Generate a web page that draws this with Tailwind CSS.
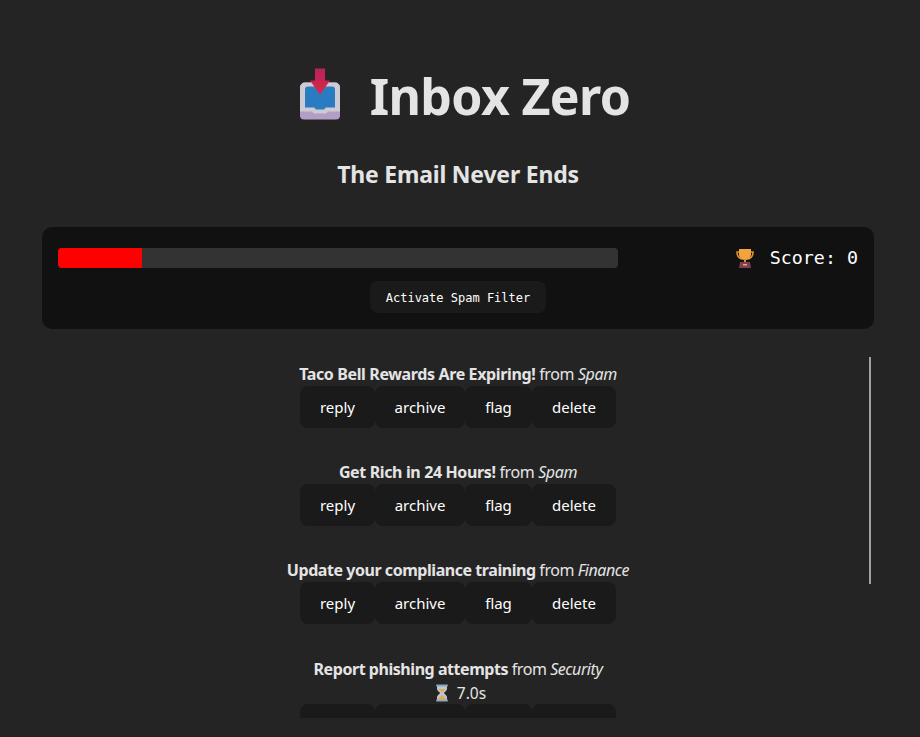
<!DOCTYPE html>
<html lang="en"><head><meta charset="utf-8"><title>Inbox Zero</title>
<script src="https://cdn.jsdelivr.net/npm/@tailwindcss/browser@4"></script></head>
<body class="bg-[#242424] h-[737px] overflow-hidden font-['Noto_Sans',sans-serif] text-[#e4e4e4]">
<div class="w-[916px] px-[42px] flex flex-col items-center">
  <h1 class="mt-[61px] h-[70px] flex items-center gap-[28px] text-[50px] font-bold leading-[70px] tracking-[-0.65px]">
    <svg class="w-[56px] h-[52px] shrink-0 overflow-visible" viewBox="-12 2.500 56 52"><defs><linearGradient id="a" x1="0" y1="0" x2="0" y2="1"><stop offset="0" stop-color="#b5245f"/><stop offset="1" stop-color="#e0243f"/></linearGradient></defs><path d="M2 20a5 5 0 0 1 5-5h30a5 5 0 0 1 5 5v28a4 4 0 0 1-4 4H6a4 4 0 0 1-4-4z" fill="#b39fc6"/><path d="M2 20a5 5 0 0 1 5-5h30a5 5 0 0 1 5 5v24H30q-1 2-3 2H17q-2 0-3-2H2z" fill="#cfcbd2"/><path d="M7 22a3 3 0 0 1 3-3h24a3 3 0 0 1 3 3v18H28q-1 0-1 1t-2 1h-6q-2 0-2-1t-1-1H7z" fill="#2b7bc2"/><path d="M17 1h10v12h5L22 27 12 13h5z" fill="url(#a)"/></svg>
    <span>Inbox Zero</span>
  </h1>
  <h2 class="mt-[28px] h-[30px] text-[23px] font-bold leading-[30px] tracking-[-0.2px]">The Email Never Ends</h2>
  <section class="mt-[38px] w-[832px] h-[102px] shrink-0 bg-[#111111] rounded-[10px] px-4 pt-[21px] flex flex-col">
    <div class="flex items-center justify-between h-5">
      <div class="w-[560px] h-5 bg-[#333333] rounded-[4px] overflow-hidden"><div class="w-[84px] h-5 bg-[#ff0000]"></div></div>
      <div class="flex items-center gap-[15px] text-white font-['DejaVu_Sans_Mono',monospace] text-[18.33px] leading-5">
        <svg class="w-5 h-5" viewBox="0 0 20 20"><path d="M5 4H2c0 4 1 6 5 7M15 4h3c0 4-1 6-5 7" fill="none" stroke="#d9912f" stroke-width="1.6"/><path d="M4 1h12v5c0 4-3 6-6 6s-6-2-6-6z" fill="#f2a33c"/><rect x="9" y="11" width="2" height="3" fill="#d9912f"/><path d="M5 14h10l1 6H4z" fill="#7c3f56"/><rect x="8" y="16" width="4" height="1.5" fill="#e8b04a"/></svg>
        <span>Score: 0</span>
      </div>
    </div>
    <button class="self-center mt-[13px] w-[176px] h-[32px] pt-[1px] rounded-lg bg-[#1a1a1a] text-white font-['DejaVu_Sans_Mono',monospace] text-[12px]">Activate Spam Filter</button>
  </section>
  <div class="relative mt-7 w-[832px] h-[361px] shrink-0 overflow-hidden">
    <div class="absolute right-[3px] top-0 w-[2px] h-[227px] bg-[#a0a0a0]"></div>
    <ul class="flex flex-col items-center text-[16px] leading-[20px]">
      <li class="h-[98px] pt-[7px] flex flex-col items-center">
        <p class="h-[23px] -mb-px tracking-[-0.37px]"><strong class="font-bold">Taco Bell Rewards Are Expiring!</strong> from <em>Spam</em></p>
        <div class="flex text-white text-[15px]"><button class="w-[75px] h-[42px] rounded-lg bg-[#1a1a1a]">reply</button><button class="w-[90px] h-[42px] rounded-lg bg-[#1a1a1a]">archive</button><button class="w-[67px] h-[42px] rounded-lg bg-[#1a1a1a]">flag</button><button class="w-[84px] h-[42px] rounded-lg bg-[#1a1a1a]">delete</button></div>
      </li>
      <li class="h-[98px] pt-[7px] flex flex-col items-center">
        <p class="h-[23px] -mb-px tracking-[-0.37px]"><strong class="font-bold">Get Rich in 24 Hours!</strong> from <em>Spam</em></p>
        <div class="flex text-white text-[15px]"><button class="w-[75px] h-[42px] rounded-lg bg-[#1a1a1a]">reply</button><button class="w-[90px] h-[42px] rounded-lg bg-[#1a1a1a]">archive</button><button class="w-[67px] h-[42px] rounded-lg bg-[#1a1a1a]">flag</button><button class="w-[84px] h-[42px] rounded-lg bg-[#1a1a1a]">delete</button></div>
      </li>
      <li class="h-[98px] pt-[7px] flex flex-col items-center">
        <p class="h-[23px] -mb-px tracking-[-0.45px]"><strong class="font-bold">Update your compliance training</strong> from <em>Finance</em></p>
        <div class="flex text-white text-[15px]"><button class="w-[75px] h-[42px] rounded-lg bg-[#1a1a1a]">reply</button><button class="w-[90px] h-[42px] rounded-lg bg-[#1a1a1a]">archive</button><button class="w-[67px] h-[42px] rounded-lg bg-[#1a1a1a]">flag</button><button class="w-[84px] h-[42px] rounded-lg bg-[#1a1a1a]">delete</button></div>
      </li>
      <li class="pt-[8px] flex flex-col items-center">
        <p class="tracking-[-0.45px]"><strong class="font-bold">Report phishing attempts</strong> from <em>Security</em></p>
        <p class="mt-1 ml-1 flex items-center gap-[7px] h-5 text-[15.500px]">
          <svg class="w-[16px] h-[18px]" viewBox="0 0 16 18"><path d="M3 2h10v3c0 2-3 3-3 4s3 2 3 4v3H3v-3c0-2 3-3 3-4S3 7 3 5z" fill="#b9c9d6"/><path d="M4.500 5h7c0 1.500-3 2.500-3.500 4C7.500 7.500 4.500 6.500 4.500 5zM4 15.500c0-2 3-3 4-5 1 2 4 3 4 5z" fill="#e9a94b"/><rect x="2" y="0.500" width="12" height="2" rx="1" fill="#8fa6b8"/><rect x="2" y="15.500" width="12" height="2" rx="1" fill="#8fa6b8"/></svg>
          <span>7.0s</span>
        </p>
        <div class="flex mt-[1px] text-white text-[15px]"><button class="w-[75px] h-[42px] rounded-lg bg-[#1a1a1a] pt-[6px]">reply</button><button class="w-[90px] h-[42px] rounded-lg bg-[#1a1a1a] pt-[6px]">archive</button><button class="w-[67px] h-[42px] rounded-lg bg-[#1a1a1a] pt-[6px]">flag</button><button class="w-[84px] h-[42px] rounded-lg bg-[#1a1a1a] pt-[6px]">delete</button></div>
      </li>
    </ul>
  </div>
</div>
</body></html>
